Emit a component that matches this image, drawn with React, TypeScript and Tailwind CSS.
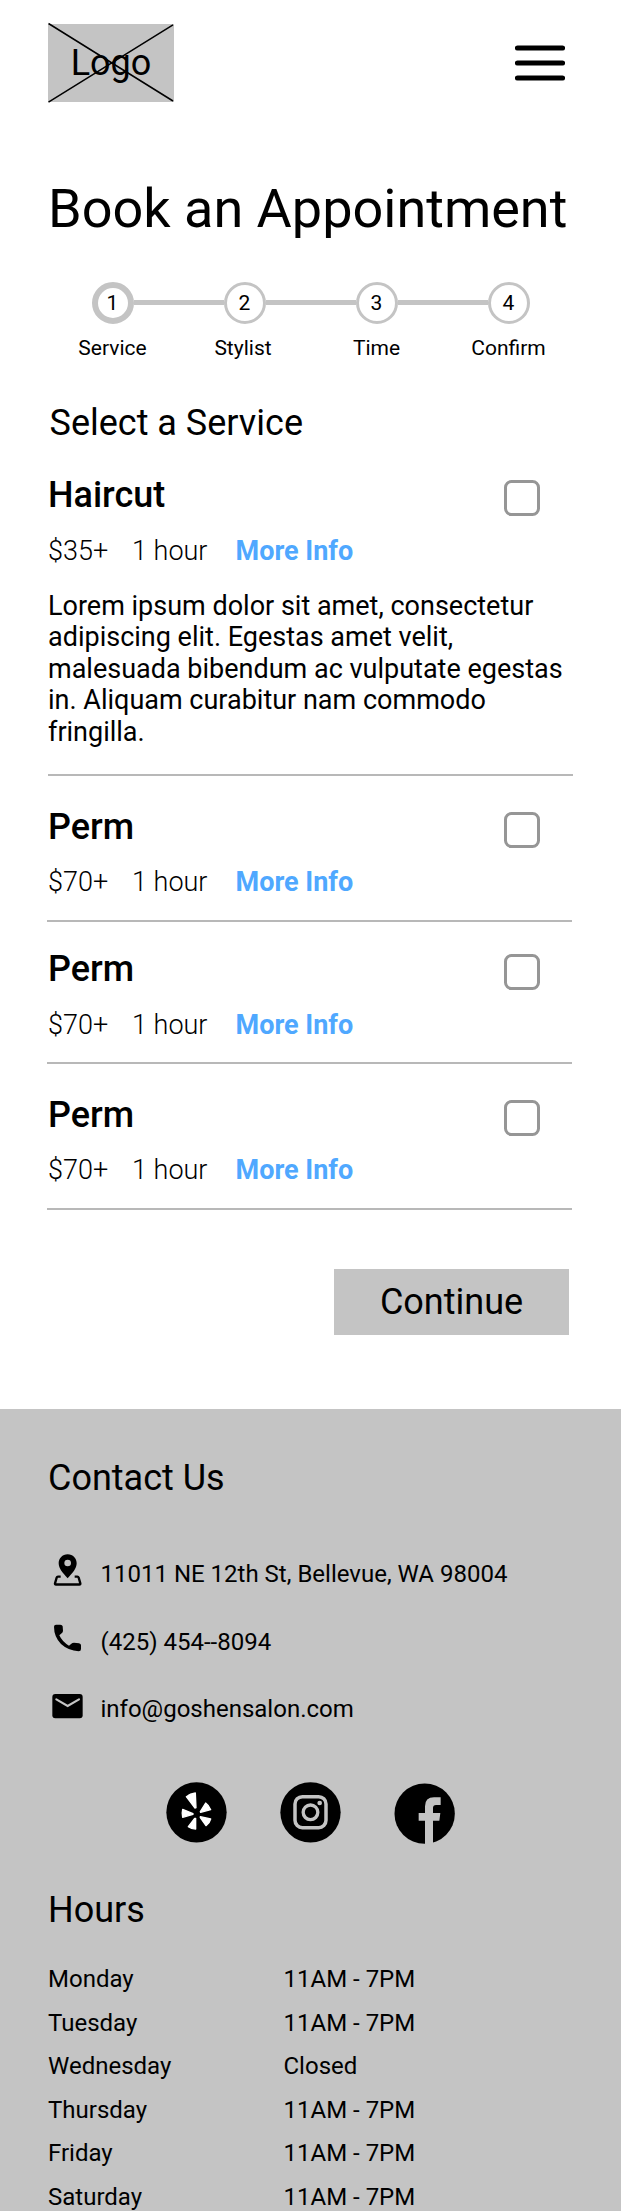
import React from "react";

const steps = ["Service", "Stylist", "Time", "Confirm"];

const hours = [
  ["Monday", "11AM - 7PM"],
  ["Tuesday", "11AM - 7PM"],
  ["Wednesday", "Closed"],
  ["Thursday", "11AM - 7PM"],
  ["Friday", "11AM - 7PM"],
  ["Saturday", "11AM - 7PM"],
];

function Header() {
  return (
    <header className="flex items-start justify-between pt-6 pl-12 pr-14">
      <div className="relative flex h-[78px] w-[126px] items-center justify-center bg-[#c4c4c4]">
        <span className="text-[36px] leading-[42px]">Logo</span>
        <svg className="absolute inset-0 overflow-visible" width="126" height="78" viewBox="0 0 126 78">
          <path d="M.5-.5 125 77M.5 78.200 125 .8" stroke="#000" strokeWidth="1.500" />
        </svg>
      </div>
      <button aria-label="Menu" className="mt-5">
        <svg className="block h-[38px] w-[50px]" viewBox="0 0 50 38">
          <path d="M2.500 4H47.500M2.500 19H47.500M2.500 34H47.500" stroke="#000" strokeWidth="5.200" strokeLinecap="round" />
        </svg>
      </button>
    </header>
  );
}

function Stepper() {
  return (
    <ol className="mt-[41px] ml-[46.500px] flex">
      {steps.map((step, i) => (
        <li key={step} className="w-[132px]">
          <div className="flex h-[42px] items-center">
            <span className={i === 0 ? "h-[4.500px] flex-1" : "mb-[1.500px] h-[4.500px] flex-1 bg-[#c4c4c4]"} />
            <span
              className={
                i === 0
                  ? "flex size-[42px] items-center justify-center rounded-full border-[6px] border-[#c4c4c4] text-[21px] leading-6"
                  : "flex size-[42px] items-center justify-center rounded-full border-[3px] border-[#c4c4c4] text-[21px] leading-6"
              }
            >
              {i + 1}
            </span>
            <span className={i === 3 ? "h-[4.500px] flex-1" : "mb-[1.500px] h-[4.500px] flex-1 bg-[#c4c4c4]"} />
          </div>
          <p className={i === 1 ? "mt-3 pr-[3px] text-center text-[21px] leading-[25px]" : "mt-3 text-center text-[21px] leading-[25px]"}>
            {step}
          </p>
        </li>
      ))}
    </ol>
  );
}

function Service({ name, price }: { name: string; price: string }) {
  return (
    <div className="pl-12">
      <div className="flex items-start justify-between pr-[81px]">
        <h3 className="text-[36px] leading-[42px] font-medium">{name}</h3>
        <span className="mt-[6px] size-9 rounded-[7.500px] border-[3px] border-[#969696]" />
      </div>
      <div className="mt-[18.500px] flex pb-[.5px] text-[27px] leading-8 font-light">
        <span className="w-[84px]">{price}</span>
        <span className="w-[103.500px]">1 hour</span>
        <a className="font-bold text-[#4fa8ff]">More Info</a>
      </div>
    </div>
  );
}

function Divider() {
  return (
    <div className="ml-[47px] h-[1.500px] w-[525px]">
      <div className="h-[2px] bg-[#b8b8b8]" />
    </div>
  );
}

function PinIcon() {
  return (
    <svg className="h-[33px] w-8" viewBox="36 38 96 99">
      <path fillRule="evenodd" d="M83 42C67 42 56 54 56 69C56 84 68 98 83 114C98 98 110 84 110 69C110 54 99 42 83 42ZM83 58a10 10 0 1 1 0 20a10 10 0 1 1 0-20Z" />
      <path d="M62 109H54Q51 109 50 112L45 129Q44 132.500 48 132.500H118Q122 132.500 121 129L116 112Q115 109 112 109H104" fill="none" stroke="#000" strokeWidth="7" />
    </svg>
  );
}

function PhoneIcon() {
  return (
    <svg className="h-[33px] w-8" viewBox="36 240 96 99">
      <path d="M48 254H61Q67 254 68 259L69 272Q69 277 65 280L58 286Q67 306 87 317L94 311Q97 308 102 308L117 310Q123 311 123 316V327Q123 334 116 334Q85 332 63 312Q42 290 42 260Q42 254 48 254Z" />
    </svg>
  );
}

function MailIcon() {
  return (
    <svg className="h-[33px] w-8" viewBox="36 442 96 99">
      <rect x="37" y="460" width="91" height="73" rx="9" />
      <path d="M49 476 83 496 117 476" fill="none" stroke="#c4c4c4" strokeWidth="6.500" strokeLinecap="round" />
    </svg>
  );
}

function YelpIcon() {
  return (
    <svg className="size-[61px]" viewBox="48 35 183 183">
      <circle cx="139.500" cy="126" r="90.500" />
      <g fill="#fff" stroke="#fff" strokeWidth="4" strokeLinejoin="round">
        <path d="M109 79Q121 70 136 68L138 112L135 113Z" />
        <path d="M151 124 167 98Q177 105 182 118L152 126Z" />
        <path d="M151 139 182 146Q179 158 168 166L151 142Z" />
        <path d="M137 144V176Q124 176 115 169L134 144Z" />
        <path d="M98 117 129 130V132L98 141Q95 129 98 117Z" />
      </g>
    </svg>
  );
}

function InstagramIcon() {
  return (
    <svg className="size-[61px]" viewBox="390 35 183 183">
      <circle cx="481.500" cy="126" r="90.500" />
      <g fill="none" stroke="#c4c4c4">
        <rect x="435" y="79" width="93" height="93" rx="22" strokeWidth="10.500" />
        <circle cx="481.500" cy="126" r="22" strokeWidth="10" />
      </g>
      <circle cx="509" cy="98" r="7" fill="#c4c4c4" />
    </svg>
  );
}

function FacebookIcon() {
  return (
    <svg className="size-[61px] overflow-visible" viewBox="732 35 183 183">
      <circle cx="824" cy="130" r="90.500" />
      <path fill="#c4c4c4" d="M825 223V151H806V128H825V108Q825 81 852 81H872V104H858Q849 104 849 113V128H871L868 151H849V223Z" />
    </svg>
  );
}

function ContactRow({ icon, text }: { icon: React.ReactNode; text: string }) {
  return (
    <li className="flex h-[67.500px] items-start">
      <span className="w-[52.500px] shrink-0 pl-1">{icon}</span>
      <span className="mt-[7.500px] text-[24px] leading-7">{text}</span>
    </li>
  );
}

export default function App() {
  return (
    <div className="h-[2211px] w-[621px] overflow-hidden bg-white font-['Roboto',sans-serif] text-black">
      <Header />
      <main>
        <h1 className="mt-[75px] pl-12 text-[54px] leading-[64px] whitespace-nowrap">Book an Appointment</h1>
        <Stepper />
        <h2 className="mt-[41px] pl-[49.500px] text-[36px] leading-[42px]">Select a Service</h2>
        <div className="mt-[30px]">
          <Service name="Haircut" price="$35+" />
          <p className="mt-[23.500px] ml-12 w-[525px] text-[27px] leading-[31.500px]">
            Lorem ipsum dolor sit amet, consectetur adipiscing elit. Egestas amet velit, malesuada bibendum ac vulputate egestas in. Aliquam curabitur nam commodo fringilla.
          </p>
          <div className="mt-[26px] pl-px">
            <Divider />
          </div>
        </div>
        <div className="mt-[30px]">
          <Service name="Perm" price="$70+" />
          <div className="mt-[21px]"><Divider /></div>
        </div>
        <div className="mt-[27px]">
          <Service name="Perm" price="$70+" />
          <div className="mt-[21px]"><Divider /></div>
        </div>
        <div className="mt-[30px]">
          <Service name="Perm" price="$70+" />
          <div className="mt-[21px]"><Divider /></div>
        </div>
        <button className="mt-[60px] ml-[334px] flex h-[66px] w-[235px] items-center justify-center bg-[#c4c4c4] text-[36px] leading-[42px]">
          Continue
        </button>
      </main>
      <footer className="mt-[73.500px] h-[810px] bg-[#c4c4c4] pt-12 pl-12">
        <h2 className="text-[36px] leading-[42px]">Contact Us</h2>
        <ul className="mt-[54px]">
          <ContactRow icon={<PinIcon />} text="11011 NE 12th St, Bellevue, WA 98004" />
          <ContactRow icon={<PhoneIcon />} text="(425) 454--8094" />
          <ContactRow icon={<MailIcon />} text="info@goshensalon.com" />
        </ul>
        <div className="mt-[26.500px] ml-[118px] flex gap-[53px]">
          <YelpIcon />
          <InstagramIcon />
          <FacebookIcon />
        </div>
        <h2 className="mt-[46px] text-[36px] leading-[42px]">Hours</h2>
        <dl className="mt-[27px]">
          {hours.map(([day, time]) => (
            <div key={day} className="flex h-[43.500px] items-center text-[24px] leading-7">
              <dt className="w-[235.500px]">{day}</dt>
              <dd>{time}</dd>
            </div>
          ))}
        </dl>
      </footer>
    </div>
  );
}
